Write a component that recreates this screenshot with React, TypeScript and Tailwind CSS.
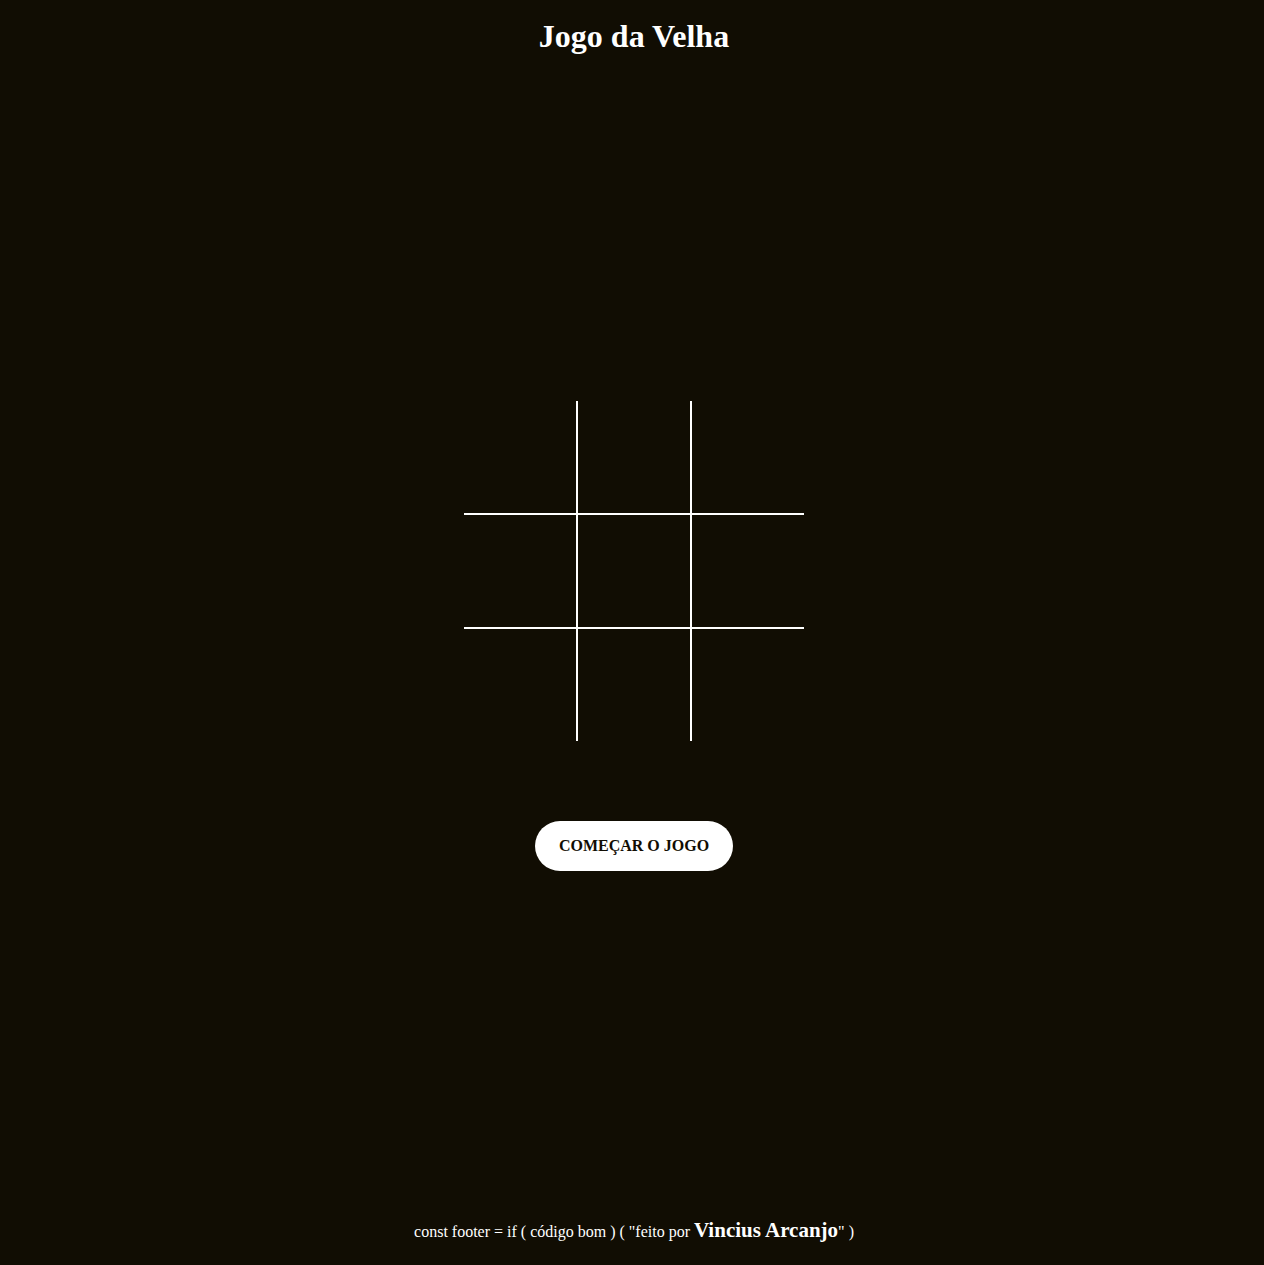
import React, { useState } from 'react';

type Cell = 'X' | 'O' | null;

const cellBorders = [
  '',
  'border-l-2 border-r-2',
  '',
  'border-t-2 border-b-2',
  'border-2',
  'border-t-2 border-b-2',
  '',
  'border-l-2 border-r-2',
  '',
];

const App = () => {
  const [board, setBoard] = useState<Cell[]>(Array(9).fill(null));
  const [started, setStarted] = useState(false);
  const [turn, setTurn] = useState<'X' | 'O'>('X');

  const play = (i: number) => {
    if (!started || board[i]) return;
    const next = [...board];
    next[i] = turn;
    setBoard(next);
    setTurn(turn === 'X' ? 'O' : 'X');
  };

  const start = () => {
    setBoard(Array(9).fill(null));
    setTurn('X');
    setStarted(true);
  };

  return (
    <div className="min-h-screen bg-[#110d03] flex flex-col items-center pl-1 font-['Liberation_Serif',serif] text-white">
      <h1 className="pt-[18px] text-[32px] leading-[36px] font-bold">Jogo da Velha</h1>

      {/* Tabuleiro */}
      <div className="mt-[347px] grid grid-cols-[112px_116px_112px] grid-rows-[112px_116px_112px]">
        {board.map((cell, i) => (
          <button
            key={i}
            onClick={() => play(i)}
            className={`${cellBorders[i]} border-white flex items-center justify-center text-6xl font-bold`}
          >
            {cell}
          </button>
        ))}
      </div>

      <button
        onClick={start}
        className="mt-20 w-[198px] h-[50px] rounded-full bg-white text-[#110d03] text-base font-bold"
      >
        COMEÇAR O JOGO
      </button>

      <footer className="mt-[349px] pb-[23px] text-base leading-[20px]">
        const footer = if ( código bom ) ( "feito por{' '}
        <span className="text-[21px] font-bold">Vincius Arcanjo</span>" )
      </footer>
    </div>
  );
};

export default App;
